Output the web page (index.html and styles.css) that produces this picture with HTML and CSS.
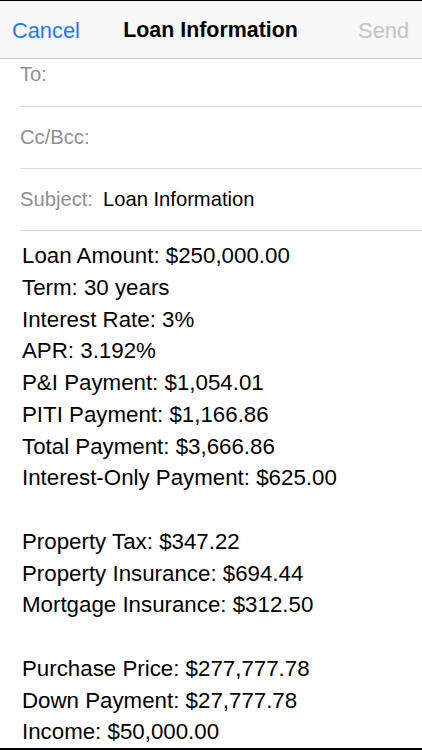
FILE: index.html
```html
<!DOCTYPE html>
<html lang="en">
  <head>
    <meta charset="UTF-8" />
    <meta name="viewport" content="width=device-width, initial-scale=1.0" />
    <title>Loan Information</title>
    <link rel="stylesheet" href="styles.css">
  </head>

  <body>
    <div class="screen">
      <div class="nav_bar">
        <span class="nav_btn cancel">Cancel</span>
        <span class="nav_title">Loan Information</span>
        <span class="nav_btn send">Send</span>
      </div>

      <div class="field field_to">
        <span class="field_label">To:</span>
      </div>
      <div class="field">
        <span class="field_label">Cc/Bcc:</span>
      </div>
      <div class="field">
        <span class="field_label">Subject:</span>
        <span class="field_value">Loan Information</span>
      </div>

      <div class="mail_body">
        <p>Loan Amount: $250,000.00</p>
        <p>Term: 30 years</p>
        <p>Interest Rate: 3%</p>
        <p>APR: 3.192%</p>
        <p>P&amp;I Payment: $1,054.01</p>
        <p>PITI Payment: $1,166.86</p>
        <p>Total Payment: $3,666.86</p>
        <p>Interest-Only Payment: $625.00</p>
        <p class="blank"></p>
        <p>Property Tax: $347.22</p>
        <p>Property Insurance: $694.44</p>
        <p>Mortgage Insurance: $312.50</p>
        <p class="blank"></p>
        <p>Purchase Price: $277,777.78</p>
        <p>Down Payment: $27,777.78</p>
        <p>Income: $50,000.00</p>
      </div>
    </div>
  </body>
</html>
```

FILE: styles.css
```css
html,
body {
  width: 100%;
  height: 100%;
  margin: 0;
  padding: 0;
  font-family: "Liberation Sans", Arial, sans-serif;
  background-color: #fff;
}

.screen {
  width: 422px;
  height: 750px;
  box-sizing: border-box;
  border-top: 1px solid #000;
  border-bottom: 2px solid #000;
  overflow: hidden;
  display: flex;
  flex-direction: column;
}

.nav_bar {
  height: 58px;
  flex-shrink: 0;
  box-sizing: border-box;
  display: grid;
  grid-template-columns: 1fr auto 1fr;
  align-items: center;
  padding: 2px 13px 0 12px;
  background-color: #f7f7f8;
  border-bottom: 1px solid #c8c8cc;
}

.nav_btn {
  font-size: 21.8px;
}

.cancel {
  color: #1a7cf0;
}

.send {
  color: #c4c4c6;
  justify-self: end;
}

.nav_title {
  font-size: 21.4px;
  font-weight: bold;
  color: #000;
}

.field {
  margin-left: 20px;
  height: 62px;
  flex-shrink: 0;
  box-sizing: border-box;
  display: flex;
  align-items: center;
  border-bottom: 1px solid #dcdce0;
  font-size: 20.2px;
}

.field_to {
  height: 48px;
  align-items: flex-start;
  padding-top: 4px;
}

.field_label {
  color: #8e8e93;
}

.field_value {
  color: #000;
  margin-left: 10px;
}

.mail_body {
  padding: 9px 0 0 22px;
}

.mail_body p {
  margin: 0;
  font-size: 22.3px;
  line-height: 31.75px;
  height: 31.75px;
  color: #000;
  white-space: nowrap;
}
```
